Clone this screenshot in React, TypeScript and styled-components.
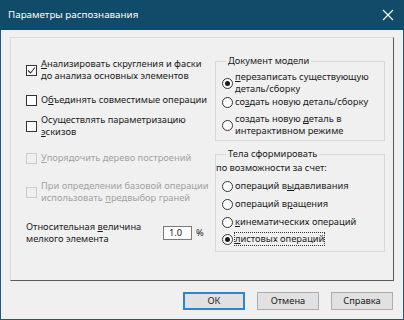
import React from 'react'
import styled, { createGlobalStyle } from 'styled-components'

const GlobalStyle = createGlobalStyle`
  html, body { margin: 0; padding: 0; background: #f0f0f0; }
  * { box-sizing: border-box; }
`

const FONT = `"Noto Sans", "DejaVu Sans", sans-serif`

const Window = styled.div`
  width: 404px;
  height: 320px;
  display: flex;
  flex-direction: column;
  background: #f0f0f0;
  border: 1px solid #1d5a7b;
  border-top: none;
  font-family: ${FONT};
  font-size: 9.3px;
  line-height: 12px;
  color: #1a1a1a;
  white-space: nowrap;
`

const TitleBar = styled.div`
  height: 30px;
  flex: none;
  display: flex;
  align-items: center;
  justify-content: space-between;
  padding: 0 8px 0 8px;
  margin: 0 -1px;
  background: #104b6a;
  color: #fff;
  font-size: 9.8px;
`

const CloseIcon = styled.svg`
  width: 12px;
  height: 12px;
  margin-right: 2px;
`

const Body = styled.div`
  flex: 1;
  display: flex;
  flex-direction: column;
  padding: 7px 9px 0 9px;
`

const Panel = styled.div`
  height: 244px;
  display: grid;
  grid-template-columns: 1fr 170px;
  padding: 0 8px 0 15px;
  border: 1px solid;
  border-color: #dadada #5a5a5a #5a5a5a #dadada;
`

const Column = styled.div`
  display: flex;
  flex-direction: column;
`

const Check = styled.label<{ $mt: number; $disabled?: boolean }>`
  display: flex;
  align-items: center;
  gap: 4px;
  margin-top: ${p => p.$mt}px;
  color: ${p => (p.$disabled ? '#a2a2a2' : '#1a1a1a')};
`

const Box = styled.span<{ $disabled?: boolean }>`
  flex: none;
  width: 11px;
  height: 11px;
  display: flex;
  align-items: center;
  justify-content: center;
  border: 1px solid ${p => (p.$disabled ? '#cccccc' : '#333')};
  background: ${p => (p.$disabled ? '#f0f0f0' : '#fff')};
`

const U = styled.span`
  text-decoration: underline;
  text-underline-offset: 1px;
`

const SizeRow = styled.div`
  display: flex;
  align-items: center;
  margin-top: 17px;
`

const SizeLabel = styled.div`
  width: 137px;
`

const NumInput = styled.div`
  width: 29px;
  height: 14px;
  display: flex;
  align-items: center;
  padding-left: 5px;
  background: #fff;
  border: 1px solid #7a7a7a;
`

const Percent = styled.span`
  margin-left: 4px;
`

const Group = styled.fieldset<{ $mt: number; $pb: number }>`
  margin: ${p => p.$mt}px 0 0 0;
  padding: 0 4px ${p => p.$pb}px 6px;
  border: 1px solid #d8d8d8;
  display: flex;
  flex-direction: column;
  min-width: 0;
`

const Legend = styled.legend`
  padding: 0 2px;
  margin-left: 4px;
  line-height: 12px;
`

const Caption = styled.div`
  margin: 2px 0 0 -6px;
  background: #f0f0f0;
  position: relative;
`

const Radio = styled.label<{ $mt: number }>`
  display: flex;
  align-items: center;
  gap: 2px;
  margin-top: ${p => p.$mt}px;
`

const Circle = styled.span<{ $on?: boolean }>`
  flex: none;
  width: 11px;
  height: 11px;
  border-radius: 50%;
  border: 1px solid #333;
  background: #fff;
  display: flex;
  align-items: center;
  justify-content: center;
  &::after {
    content: '';
    width: 5px;
    height: 5px;
    border-radius: 50%;
    background: ${p => (p.$on ? '#1a1a1a' : 'transparent')};
  }
`

const Focus = styled.span`
  outline: 1px dotted #333;
  outline-offset: 0;
`

const Footer = styled.div`
  display: flex;
  justify-content: flex-end;
  gap: 12px;
  margin-top: 11px;
  padding-right: 1px;
`

const Button = styled.div<{ $default?: boolean }>`
  width: 62px;
  height: 18px;
  display: flex;
  align-items: center;
  justify-content: center;
  background: #e1e1e1;
  border: ${p => (p.$default ? '2px solid #2a86d2' : '1px solid #adadad')};
`

function CheckMark() {
  return (
    <svg width="9" height="9" viewBox="0 0 9 9">
      <polyline points="1,4.5 3.5,7 8,1.5" fill="none" stroke="#333" strokeWidth="1.1" />
    </svg>
  )
}

export default function App() {
  return (
    <>
      <GlobalStyle />
      <Window>
        <TitleBar>
          <span>Параметры распознавания</span>
          <CloseIcon viewBox="0 0 12 12">
            <path d="M1 1 L11 11 M11 1 L1 11" stroke="#fff" strokeWidth="1.1" />
          </CloseIcon>
        </TitleBar>
        <Body>
          <Panel>
            <Column>
              <Check $mt={20}>
                <Box><CheckMark /></Box>
                <span><U>А</U>нализировать скругления и фаски<br />до анализа основных элементов</span>
              </Check>
              <Check $mt={12}>
                <Box />
                <span>О<U>б</U>ъединять совместимые операции</span>
              </Check>
              <Check $mt={8}>
                <Box />
                <span>Осуществлять параметризацию<br /><U>э</U>скизов</span>
              </Check>
              <Check $mt={14} $disabled>
                <Box $disabled />
                <span><U>У</U>порядочить дерево построений</span>
              </Check>
              <Check $mt={16} $disabled>
                <Box $disabled />
                <span>При определении базовой операции<br />использовать <U>п</U>редвыбор граней</span>
              </Check>
              <SizeRow>
                <SizeLabel>Относительная <U>в</U>еличина<br />мелкого элемента</SizeLabel>
                <NumInput>1.0</NumInput>
                <Percent>%</Percent>
              </SizeRow>
            </Column>
            <Column>
              <Group $mt={17} $pb={3}>
                <Legend>Документ модели</Legend>
                <Radio $mt={4}>
                  <Circle $on />
                  <span><U>п</U>ерезаписать существующую<br />деталь/сборку</span>
                </Radio>
                <Radio $mt={1}>
                  <Circle />
                  <span>со<U>з</U>дать новую деталь/сборку</span>
                </Radio>
                <Radio $mt={5}>
                  <Circle />
                  <span>создать новую <U>д</U>еталь в<br />интерактивном режиме</span>
                </Radio>
              </Group>
              <Group $mt={7} $pb={6}>
                <Legend>Тела сформировать</Legend>
                <Caption>по возможности за счет:</Caption>
                <Radio $mt={6}>
                  <Circle />
                  <span>операций в<U>ы</U>давливания</span>
                </Radio>
                <Radio $mt={6}>
                  <Circle />
                  <span>операций в<U>р</U>ащения</span>
                </Radio>
                <Radio $mt={6}>
                  <Circle />
                  <span><U>к</U>инематических операций</span>
                </Radio>
                <Radio $mt={5}>
                  <Circle $on />
                  <Focus><U>л</U>истовых операций</Focus>
                </Radio>
              </Group>
            </Column>
          </Panel>
          <Footer>
            <Button $default>ОК</Button>
            <Button>Отмена</Button>
            <Button>Справка</Button>
          </Footer>
        </Body>
      </Window>
    </>
  )
}
